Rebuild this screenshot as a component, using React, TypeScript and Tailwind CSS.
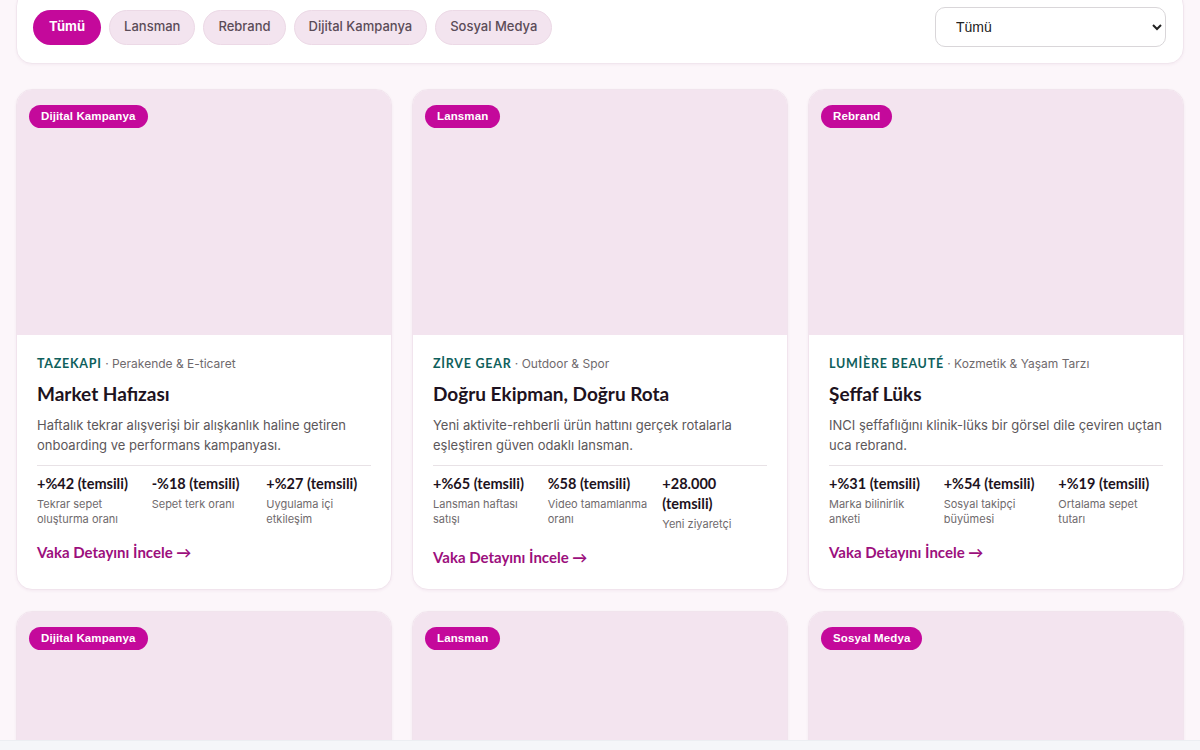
import { useState } from 'react';

type Metric = { value: string; label: string };
type CaseItem = {
  tag: string;
  brand?: string;
  sector?: string;
  title?: string;
  desc?: string;
  metrics?: Metric[];
};

const filters = ['Tümü', 'Lansman', 'Rebrand', 'Dijital Kampanya', 'Sosyal Medya'];

const cases: CaseItem[] = [
  {
    tag: 'Dijital Kampanya',
    brand: 'TAZEKAPI',
    sector: 'Perakende & E-ticaret',
    title: 'Market Hafızası',
    desc: 'Haftalık tekrar alışverişi bir alışkanlık haline getiren onboarding ve performans kampanyası.',
    metrics: [
      { value: '+%42 (temsili)', label: 'Tekrar sepet oluşturma oranı' },
      { value: '-%18 (temsili)', label: 'Sepet terk oranı' },
      { value: '+%27 (temsili)', label: 'Uygulama içi etkileşim' },
    ],
  },
  {
    tag: 'Lansman',
    brand: 'ZİRVE GEAR',
    sector: 'Outdoor & Spor',
    title: 'Doğru Ekipman, Doğru Rota',
    desc: 'Yeni aktivite-rehberli ürün hattını gerçek rotalarla eşleştiren güven odaklı lansman.',
    metrics: [
      { value: '+%65 (temsili)', label: 'Lansman haftası satışı' },
      { value: '%58 (temsili)', label: 'Video tamamlanma oranı' },
      { value: '+28.000 (temsili)', label: 'Yeni ziyaretçi' },
    ],
  },
  {
    tag: 'Rebrand',
    brand: 'LUMİÈRE BEAUTÉ',
    sector: 'Kozmetik & Yaşam Tarzı',
    title: 'Şeffaf Lüks',
    desc: 'INCI şeffaflığını klinik-lüks bir görsel dile çeviren uçtan uca rebrand.',
    metrics: [
      { value: '+%31 (temsili)', label: 'Marka bilinirlik anketi' },
      { value: '+%54 (temsili)', label: 'Sosyal takipçi büyümesi' },
      { value: '+%19 (temsili)', label: 'Ortalama sepet tutarı' },
    ],
  },
  // below the fold: only the cover is in view
  { tag: 'Dijital Kampanya' },
  { tag: 'Lansman' },
  { tag: 'Sosyal Medya' },
];

function CaseCard({ item }: { item: CaseItem }) {
  return (
    <div className="bg-white rounded-2xl border border-[#f1e4ed] shadow-[0_1px_3px_rgba(120,40,100,0.06)] overflow-hidden flex flex-col">
      <div className="h-[245px] bg-[#f3e4ef] px-3 pt-3 shrink-0">
        <span className="inline-block rounded-full bg-[#c4099b] text-white text-[11.5px] font-bold px-3 h-[23px] leading-[23px] tracking-[0.01em] font-['Liberation_Sans',Arial,sans-serif]">
          {item.tag}
        </span>
      </div>
      {item.title && (
        <div className="px-5 pt-[20px] pb-[20px]">
          <div className="text-[12px] leading-[18px] font-['Inter',sans-serif]">
            <span className="font-bold text-[12.5px] text-[#0f5f5c] tracking-[0.06em] font-['Lato',sans-serif]">{item.brand}</span>
            <span className="text-[#6f6a6d]"> · {item.sector}</span>
          </div>
          <h3 className="mt-[9px] text-[19px] leading-[24px] font-bold text-[#1d1220] font-['Lato',sans-serif]">
            {item.title}
          </h3>
          <p className="mt-[9px] text-[13px] leading-[20px] text-[#5c575a] font-['Inter',sans-serif]">{item.desc}</p>
          <div className="mt-[10px] border-t border-[#e8e2e6] pt-[8px] grid grid-cols-3 gap-x-[10px]">
            {item.metrics?.map((m) => (
              <div key={m.value}>
                <div className="text-[14.5px] leading-[20px] font-bold text-[#1d1220] font-['Lato',sans-serif]">{m.value}</div>
                <div className="mt-[3px] text-[11px] leading-[15px] text-[#6f6a6d] font-['Inter',sans-serif]">{m.label}</div>
              </div>
            ))}
          </div>
          <a className="inline-block mt-[15px] text-[15px] leading-[20px] font-bold text-[#9c0f7d] font-['Lato',sans-serif]">
            Vaka Detayını İncele →
          </a>
        </div>
      )}
    </div>
  );
}

export default function App() {
  const [active, setActive] = useState('Tümü');

  return (
    <div className="h-[750px] overflow-hidden bg-[#fcf6fa] flex flex-col">
      <div className="flex-1 overflow-hidden px-4">
        <div className="-mt-[10px] bg-white rounded-2xl border border-[#f1e6ee] shadow-[0_1px_3px_rgba(120,40,100,0.05)] px-4 py-4 flex items-center justify-between">
          <div className="flex items-center gap-2">
            {filters.map((f) => (
              <button
                key={f}
                onClick={() => setActive(f)}
                className={
                  f === active
                    ? "h-[35px] px-4 rounded-full bg-[#c4099b] text-white text-[13px] font-bold font-['Inter',sans-serif]"
                    : "h-[35px] px-[14px] rounded-full bg-[#f3e4ef] border border-[#ecd9e6] text-[#5b4c58] text-[13px] font-medium font-['Inter',sans-serif]"
                }
              >
                {f}
              </button>
            ))}
          </div>
          <select className="w-[231px] h-[40px] mr-[1px] rounded-[10px] border border-[#d9d6d9] bg-white pl-4 pr-2 text-[14px] text-[#222] font-['Liberation_Sans',Arial,sans-serif]">
            <option>Tümü</option>
            <option>Perakende & E-ticaret</option>
            <option>Outdoor & Spor</option>
          </select>
        </div>

        <div className="mt-[25px] grid grid-cols-3 gap-x-5 gap-y-[21px]">
          {cases.map((c, i) => (
            <CaseCard key={i} item={c} />
          ))}
        </div>
      </div>
      <div className="h-[10px] shrink-0 bg-[#f5f6f9] border-t border-[#eceef2]" />
    </div>
  );
}
